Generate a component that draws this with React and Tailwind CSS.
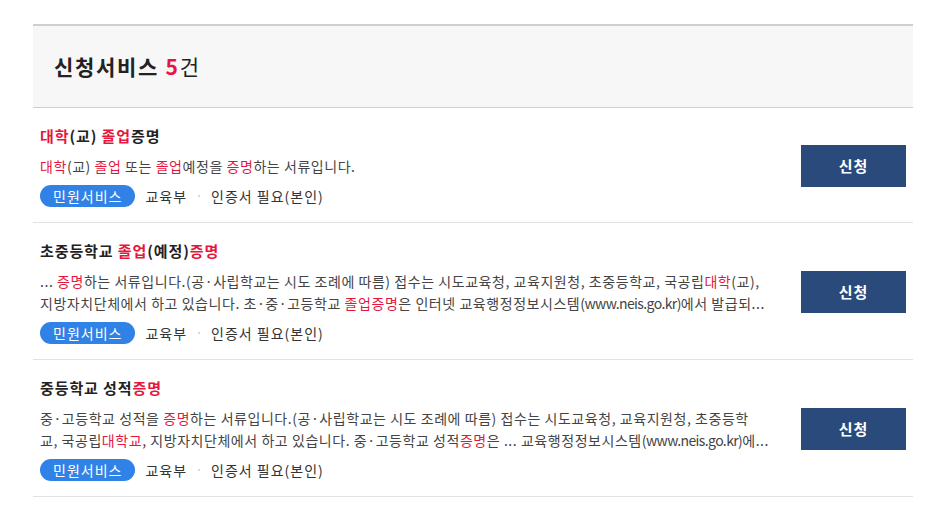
import React from 'react'

const R = ({ children }) => <span className="text-[#e5173f]">{children}</span>

const items = [
  {
    title: (
      <>
        <R>대학</R>(교) <R>졸업</R>증명
      </>
    ),
    lines: [
      <>
        <R>대학</R>(교) <R>졸업</R> 또는 <R>졸업</R>예정을 <R>증명</R>하는 서류입니다.
      </>,
    ],
  },
  {
    title: (
      <>
        초중등학교 <R>졸업</R>(예정)<R>증명</R>
      </>
    ),
    lines: [
      <>
        ... <R>증명</R>하는 서류입니다.(공·사립학교는 시도 조례에 따름) 접수는 시도교육청, 교육지원청, 초중등학교, 국공립<R>대학</R>(교),
      </>,
      <>
        지방자치단체에서 하고 있습니다. 초·중·고등학교 <R>졸업증명</R>은 인터넷 교육행정정보시스템<span className="tracking-[-0.6px]">(www.neis.go.kr)</span>에서 발급되...
      </>,
    ],
  },
  {
    title: (
      <>
        중등학교 성적<R>증명</R>
      </>
    ),
    lines: [
      <>
        중·고등학교 성적을 <R>증명</R>하는 서류입니다.(공·사립학교는 시도 조례에 따름) 접수는 시도교육청, 교육지원청, 초중등학
      </>,
      <>
        교, 국공립<R>대학교</R>, 지방자치단체에서 하고 있습니다. 중·고등학교 성적<R>증명</R>은 ... 교육행정정보시스템<span className="tracking-[-0.6px]">(www.neis.go.kr)</span>에...
      </>,
    ],
  },
]

const App = () => {
  return (
    <div
      className="min-h-[512px] bg-white pt-[24px] pl-[33px]"
      style={{ fontFamily: '"Noto Sans CJK KR", "Noto Sans", sans-serif' }}
    >
      <div className="w-[880px]">
        {/* 헤더 */}
        <div className="h-[84px] border-t-2 border-b border-[#cfcfcf] bg-[#f7f7f7] flex items-center px-[21px]">
          <h2 className="text-[21px] font-bold text-[#222] leading-none tracking-[1.7px]">
            신청서비스 <span className="text-[#e5173f]">5</span>
            <span className="font-normal">건</span>
          </h2>
        </div>

        {/* 목록 */}
        {items.map((item, i) => (
          <div key={i} className="flex items-center border-b border-[#e2e2e2] px-[7px] pt-[17px] pb-[15px]">
            <div className="flex-1 min-w-0 pr-[20px]">
              <div className="text-[15px] leading-[22px] font-bold text-[#222] tracking-[0.9px]">{item.title}</div>
              <div className="mt-[8px] text-[14px] leading-[22px] text-[#444] tracking-[0.55px]">
                {item.lines.map((line, j) => (
                  <div key={j} className="whitespace-nowrap">
                    {line}
                  </div>
                ))}
              </div>
              <div className="mt-[8px] h-[22px] flex items-center text-[14px] text-[#333] tracking-[1px]">
                <span className="h-[22px] px-[13px] rounded-full bg-[#3182e6] text-white leading-[22px]">
                  민원서비스
                </span>
                <span className="ml-[10px]">교육부</span>
                <span className="mx-[11px] w-[2px] h-[2px] bg-[#ccc] rounded-full" />
                <span>인증서 필요(본인)</span>
              </div>
            </div>
            <button className="w-[105px] h-[42px] bg-[#2a4a7c] text-white text-[15px] font-bold tracking-[1px] shrink-0">
              신청
            </button>
          </div>
        ))}
      </div>
    </div>
  )
}

export default App
